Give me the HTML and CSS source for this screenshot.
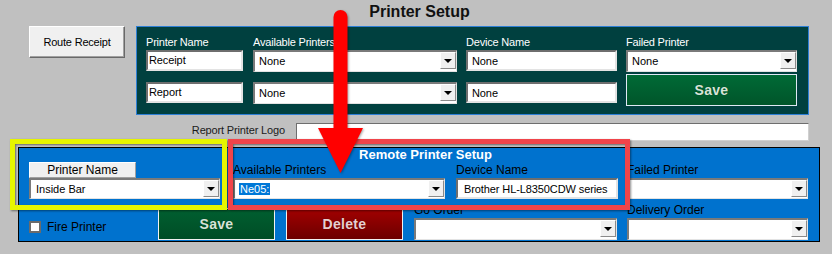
FILE: index.html
```html
<!DOCTYPE html>
<html lang="en">
<head>
  <meta charset="UTF-8">
  <title>Printer Setup</title>
  <link rel="stylesheet" href="styles.css">
</head>
<body>
  <div class="page-title">Printer Setup</div>

  <div class="top-row">
    <button class="route-btn">Route Receipt</button>

    <div class="setup-panel">
      <div class="col col-name">
        <label>Printer Name</label>
        <div class="textbox tb-tight">Receipt</div>
        <div class="textbox tb-tight second">Report</div>
      </div>
      <div class="col col-avail">
        <label>Available Printers</label>
        <div class="combo"><span class="combo-text">None</span><span class="drop"></span></div>
        <div class="combo second"><span class="combo-text">None</span><span class="drop"></span></div>
      </div>
      <div class="col col-device">
        <label>Device Name</label>
        <div class="textbox">None</div>
        <div class="textbox second">None</div>
      </div>
      <div class="col col-failed">
        <label>Failed Printer</label>
        <div class="combo"><span class="combo-text">None</span><span class="drop"></span></div>
        <button class="btn btn-save top-save">Save</button>
      </div>
    </div>
  </div>

  <div class="logo-row">
    <label class="logo-label">Report Printer Logo</label>
    <div class="textbox logo-box"></div>
  </div>

  <div class="remote-panel">
    <div class="remote-top">
      <div class="rcol rcol-name">
        <div class="col-header">Printer Name</div>
        <div class="combo"><span class="combo-text">Inside Bar</span><span class="drop"></span></div>
      </div>
      <div class="remote-group">
        <div class="remote-title">Remote Printer Setup</div>
        <div class="remote-fields">
          <div class="rcol rcol-avail">
            <label>Available Printers</label>
            <div class="combo"><span class="combo-text"><span class="selected">Ne05:</span></span><span class="drop"></span></div>
          </div>
          <div class="rcol rcol-device">
            <label>Device Name</label>
            <div class="textbox">Brother HL-L8350CDW series</div>
          </div>
        </div>
      </div>
      <div class="rcol rcol-failed">
        <label>Failed Printer</label>
        <div class="combo"><span class="combo-text"></span><span class="drop"></span></div>
      </div>
    </div>

    <div class="remote-bottom">
      <div class="fire">
        <span class="checkbox"></span>
        <span class="fire-label">Fire Printer</span>
      </div>
      <button class="btn btn-save low-save">Save</button>
      <button class="btn btn-delete">Delete</button>
      <div class="rcol rcol-go">
        <label>Go Order</label>
        <div class="combo tall"><span class="combo-text"></span><span class="drop"></span></div>
      </div>
      <div class="rcol rcol-delivery">
        <label>Delivery Order</label>
        <div class="combo tall"><span class="combo-text"></span><span class="drop"></span></div>
      </div>
    </div>
  </div>

  <!-- annotation marks drawn over the form -->
  <div class="mark mark-yellow"></div>
  <div class="mark mark-red"></div>
  <svg class="arrow" width="60" height="180" viewBox="0 0 60 180">
    <line x1="30.5" y1="17" x2="30.5" y2="132" stroke="#ff0000" stroke-width="14" stroke-linecap="round" />
    <polygon points="8,128 53,128 30.5,173" fill="#ff0000" />
  </svg>
</body>
</html>
```

FILE: styles.css
```css
* {
    box-sizing: border-box;
}

body {
    margin: 0;
    width: 832px;
    height: 254px;
    overflow: hidden;
    position: relative;
    background-color: #c0c0c0;
    font-family: "Liberation Sans", Arial, sans-serif;
    font-size: 11px;
    color: #000;
}

label {
    display: block;
}

button {
    font-family: inherit;
    padding: 0;
    margin: 0;
}

.page-title {
    height: 26px;
    line-height: 24px;
    padding-left: 7px;
    text-align: center;
    font-size: 16px;
    font-weight: bold;
    color: #111;
}

/* top section */
.top-row {
    display: flex;
    height: 89px;
    padding-left: 29px;
}

.route-btn {
    width: 96px;
    height: 32px;
    margin-right: 11px;
    background-color: #f0f0f0;
    border: 1px solid;
    border-color: #ffffff #696969 #696969 #ffffff;
    box-shadow: inset -1px -1px 0 #a0a0a0;
    font-size: 11px;
    letter-spacing: -0.2px;
    color: #000;
}

.setup-panel {
    display: flex;
    width: 673px;
    height: 89px;
    padding: 8px 0 0 9px;
    background-color: #00403f;
    border: 1px solid #2d7fd6;
}

.setup-panel label {
    height: 15px;
    line-height: 15px;
    color: #fff;
    letter-spacing: -0.2px;
}

.col-name { width: 97px; margin-right: 10px; }
.col-avail { width: 204px; margin-right: 9px; }
.col-device { width: 151px; margin-right: 9px; }
.col-failed { width: 171px; }

.textbox {
    height: 21px;
    padding: 2px 0 0 4px;
    line-height: 15px;
    background-color: #fff;
    border: 2px solid;
    border-color: #6e6e6e #e3e3e3 #e3e3e3 #6e6e6e;
    font-size: 11px;
    letter-spacing: -0.1px;
    white-space: nowrap;
    overflow: hidden;
}

.tb-tight {
    padding-left: 1px;
    padding-top: 1px;
}

.textbox.second {
    margin-top: 11px;
}

.combo {
    display: flex;
    height: 22px;
    background-color: #fff;
    border-style: solid;
    border-width: 2px 1px 1px 2px;
    border-color: #7a7a7a #e3e3e3 #e3e3e3 #7a7a7a;
}

.combo.second {
    margin-top: 10px;
}

.combo.tall {
    height: 22px;
}

.combo-text {
    flex: 1;
    padding: 2px 0 0 4px;
    line-height: 15px;
    font-size: 11px;
    white-space: nowrap;
    overflow: hidden;
}

.selected {
    background-color: #0078d7;
    color: #fff;
    padding: 0 1px;
}

.drop {
    position: relative;
    width: 16px;
    height: 17px;
    margin-top: 0;
    background-color: #f0f0f0;
    border: 1px solid;
    border-color: #ffffff #8a8a8a #8a8a8a #ffffff;
}

.drop::after {
    content: "";
    position: absolute;
    left: 3px;
    top: 6px;
    border-left: 4px solid transparent;
    border-right: 4px solid transparent;
    border-top: 4px solid #000;
}

.btn {
    color: #d7e4d7;
    font-size: 14px;
    font-weight: bold;
    letter-spacing: 0.3px;
    text-shadow: 0 0 1px rgba(0, 0, 0, 0.4);
}

.btn-save {
    background: linear-gradient(#006a36, #00552a);
    border: 1px solid #dfe8f5;
}

.top-save {
    width: 171px;
    height: 32px;
    margin-top: 2px;
}

.logo-row {
    display: flex;
    margin-top: 8px;
}

.logo-label {
    width: 285px;
    margin-right: 11px;
    height: 14px;
    line-height: 14px;
    text-align: right;
    color: #1a1a1a;
    letter-spacing: -0.15px;
}

.logo-box {
    width: 513px;
    height: 18px;
    border-width: 1px;
    border-color: #6e6e6e #d0d0d0 #d0d0d0 #6e6e6e;
}

/* remote section */
.remote-panel {
    width: 802px;
    height: 95px;
    margin: 6px 0 0 18px;
    padding-left: 10px;
    background-color: #0072ce;
    border: 1px solid #000;
}

.remote-panel label {
    height: 16px;
    line-height: 16px;
    font-size: 12px;
    color: #000;
}

.remote-top {
    display: flex;
    height: 52px;
}

.rcol-name {
    width: 191px;
    margin-right: 13px;
    padding-top: 14px;
}

.col-header {
    width: 107px;
    height: 16px;
    line-height: 14px;
    text-align: center;
    font-size: 12px;
    background-color: #f0f0f0;
    border: 1px solid;
    border-color: #ffffff #a0a0a0 #a0a0a0 #ffffff;
}

.rcol-name .combo,
.remote-fields .combo,
.remote-fields .textbox,
.rcol-failed .combo {
    height: 21px;
}

.remote-group {
    width: 385px;
}

.remote-title {
    height: 14px;
    line-height: 14px;
    text-align: center;
    font-size: 13px;
    font-weight: bold;
    color: #fff;
}

.remote-fields {
    display: flex;
}

.rcol-avail { width: 212px; margin-right: 11px; }
.rcol-device { width: 162px; }
.rcol-device .textbox { padding-left: 6px; }
.rcol-name .combo-text { padding-left: 5px; }

.rcol-failed {
    width: 181px;
    margin-left: 9px;
    padding-top: 14px;
}

.remote-bottom {
    display: flex;
    height: 37px;
    margin-top: 3px;
}

.fire {
    display: flex;
    align-items: center;
    width: 129px;
    height: 12px;
    margin-top: 18px;
}

.checkbox {
    width: 12px;
    height: 12px;
    margin-right: 6px;
    background-color: #fff;
    border: 2px solid #6b6b6b;
}

.fire-label {
    font-size: 12px;
}

.low-save {
    width: 117px;
    height: 32px;
    margin: 5px 11px 0 0;
    background: linear-gradient(#005f30, #004d26);
    border-color: #f2f2f2;
}

.btn-delete {
    width: 117px;
    height: 32px;
    margin: 5px 11px 0 0;
    background: linear-gradient(#a20000, #6c0000);
    border: 1px solid #f2f2f2;
    color: #e8cfcf;
}

.rcol-go { width: 203px; }
.rcol-delivery { width: 181px; margin-left: 10px; }

.remote-bottom label {
    height: 15px;
    line-height: 14px;
}

/* annotations */
.mark {
    position: absolute;
    border: 5px solid;
    box-shadow: 1px 1px 2px rgba(0, 0, 0, 0.45), inset 1px 1px 2px rgba(0, 0, 0, 0.45);
}

.mark-yellow {
    left: 10px;
    top: 139px;
    width: 217px;
    height: 71px;
    border-color: #e6f500;
}

.mark-red {
    left: 228px;
    top: 139px;
    width: 402px;
    height: 71px;
    border-color: #f0444a;
}

.arrow {
    position: absolute;
    left: 310px;
    top: 0;
    filter: drop-shadow(1px 1px 1px rgba(0, 0, 0, 0.35));
}
```
